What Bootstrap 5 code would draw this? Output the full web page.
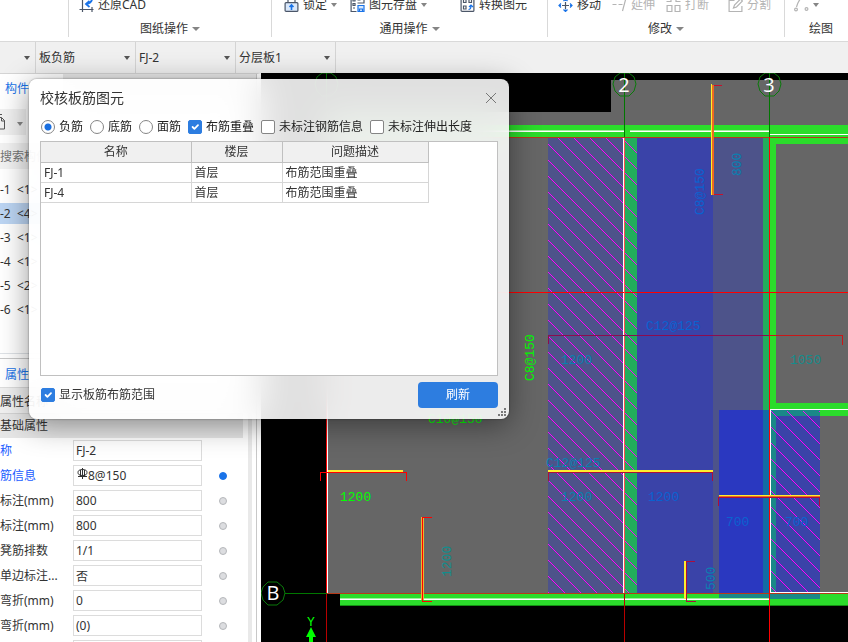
<!DOCTYPE html>
<html lang="zh-CN">
<head>
<meta charset="utf-8">
<meta name="viewport" content="width=device-width, initial-scale=1">
<title>校核板筋图元</title>
<link href="https://cdn.jsdelivr.net/npm/bootstrap@5.3.0/dist/css/bootstrap.min.css" rel="stylesheet">
<style>
body{font-family:"Noto Sans","Noto Sans CJK SC",sans-serif;font-size:12px;line-height:20px;color:#333;background:#fff}
button{font:inherit;line-height:20px}
.ribbon{border-bottom:1px solid #d9d9d9}
.ribbon-group{border-right:1px solid #d9d9d9;height:37px}
.ribbon-group:last-child{border-right:0}
.tools{margin-top:-5px;height:20px}
.tools-draw{padding-left:10px}
.tools-common{padding-left:12px}
.tools-edit{padding-left:10px;gap:11px}
.tools-shape{padding-left:9px}
.tool{background:none;border:0;padding:0;color:#333;white-space:nowrap;display:flex;align-items:center;gap:4px}
.tool:disabled{color:#b4b4b4}
.tool svg{width:15px;height:14px;fill:none;stroke:#4b5668;stroke-width:1.2}
.tool:disabled svg{stroke:#b4b4b4}
.tool svg .accent{stroke:#1a73e8}
.tool-store{margin-left:13px}
.tool-convert{margin-left:33px}
.arrow{border:3px solid transparent;border-top:4px solid #858585;border-bottom:0;display:inline-block}
.arrow-lg{border-width:4px 4px 0}
.g-start{flex:0 0 69px}.g-draw{flex:0 0 203px}.g-common{flex:0 0 276px}.g-edit{flex:0 0 237px}
.selectors{background:#f0f0f0;height:31px}
.picker{width:100px;height:31px;border:0;border-right:1px solid #d4d4d4;border-radius:0;background:transparent url("data:image/svg+xml,%3Csvg xmlns='http://www.w3.org/2000/svg' viewBox='0 0 6 4'%3E%3Cpath d='M0 0h6L3 4z' fill='%23555'/%3E%3C/svg%3E") no-repeat right 5px center/6px 4px;padding:0 12px 0 3px;font-size:12px;color:#333;appearance:none}
.picker-cut{width:36px}
.side{flex:0 0 261px;background:#fff;border-top:1px solid #d4d4d4;border-right:4px solid #fff}
.side-body{border-right:1px solid #c8c8c8}
.side-tabs{background:#e9e9e9;height:31px}
.side-tabs a{background:#fff;width:63px;padding:5px;height:31px}
.side a{color:#1a73e8;text-decoration:none}
.mini{background:#f1f1f1;border:0;height:26px;padding:0}
.mini-more{width:12px}
.side .find{width:240px;height:26px;border:0;background:#f2f2f2;padding:0;font-size:12px;color:#777}
.items{height:184px;padding-top:9px}
.items li{height:24px;padding-top:2px;white-space:pre}
.items li.on{background:linear-gradient(#fff 1px,#bcd5f3 1px,#bcd5f3 22px,#fff 22px)}
.props-tab{height:30px;border-top:1px solid #c8c8c8;border-bottom:1px solid #ddd;padding:6px 5px 0}
.props-head{background:#f0f0f0;height:25px;padding-top:4px}
.props-group{background:#e6e6e6;height:25px;width:243px;border-top:1px solid #d4d4d4;padding-top:2px}
.props-list{border-right:4px solid #e9e9e9;width:252px}
.prop{height:25px}
.prop label{width:73px;white-space:nowrap}
.prop input{width:129px;height:21px;border:1px solid #dcdcdc;padding:0 2px;font-size:12px;color:#333;background:#fff}
.bar-field{position:relative}
.prop .bar-field input{padding-left:14px}
.bar-field svg{position:absolute;left:4px;top:3px}
.blue{color:#1a5cff}
.dot{width:8px;height:8px;border-radius:50%;border:1px solid #b5b7ba;background:#dcdde0;margin-left:17px}
.dot.set{background:#1a73e8;border-color:#1a73e8}
.cad{background:#000}
.cad text{font-family:"Liberation Mono",monospace;font-size:13px}
.cad .axis{font-family:"Open Sans",sans-serif;font-size:20px;fill:#fff;text-anchor:middle}
.dialog{position:absolute;left:29px;top:79px;width:480px;border-radius:8px;background:rgba(255,255,255,.88);backdrop-filter:blur(18px);box-shadow:0 6px 30px rgba(0,0,0,.42),0 0 2px rgba(0,0,0,.5);padding:8px 11px 11px}
.dialog h1{font-size:14px;line-height:22px;font-weight:400}
.close-x{background:none;border:0;padding:0 1px;line-height:0}
.options{height:32px;gap:7px;color:#222}
.opt{display:flex;align-items:center;white-space:nowrap;gap:4px}
.opt .form-check-input{width:14px;height:14px;margin:0;border:1px solid #858585;flex:none}
.opt .form-check-input[type=checkbox]{border-radius:2px}
.opt .form-check-input[type=checkbox]:checked{background-color:#2d7de0;border-color:#2d7de0}
.opt .form-check-input[type=radio]:checked{background:radial-gradient(circle,#1a6fe0 3px,#fff 4px)}
.inset-1{padding-left:1px}
.results{height:235px;border:1px solid #c0c0c0;background:#fff}
.results table{width:387px;table-layout:fixed;border-collapse:collapse}
.c-name{width:150px}.c-floor{width:91px}.c-issue{width:146px}
.results th{font-weight:400;text-align:center;background:#f0f0f0;border:1px solid #c0c0c0;border-top:0;border-left:0;height:20px;padding:0;line-height:19px}
.results td{border:1px solid #d6d6d6;border-left:0;height:20px;padding:0 3px;line-height:19px}
.dialog-foot{padding-top:6px}
.btn-refresh{background:#2d7de0;color:#fff;width:80px;height:26px;padding:0;font-size:12px;border:0;border-radius:4px}
.grip{position:absolute;right:3px;bottom:3px}
</style>
<script src="https://cdn.jsdelivr.net/npm/bootstrap@5.3.0/dist/js/bootstrap.bundle.min.js"></script>
</head>
<body class="vh-100 d-flex flex-column overflow-hidden position-relative">
<header class="ribbon d-flex overflow-hidden flex-shrink-0 pb-1">
  <div class="ribbon-group g-start"></div>
  <div class="ribbon-group g-draw">
    <div class="tools tools-draw d-flex">
      <button class="tool"><svg viewBox="0 0 14 14"><path d="M3 0v14M0 11.500h14M12.500 9v5"/><path class="accent" d="M12.500 1.500C12 4 10 5.500 7 6M10 3L6.500 6L10 9" stroke-width="1.800"/></svg>还原CAD</button>
    </div>
    <div class="d-flex justify-content-center align-items-center pt-1 gap-1">图纸操作 <span class="arrow arrow-lg"></span></div>
  </div>
  <div class="ribbon-group g-common">
    <div class="tools tools-common d-flex">
      <button class="tool"><svg viewBox="0 0 14 14"><path d="M3.500 5V1h7v4"/><rect x=".6" y="4.600" width="12.800" height="8.800" rx="1" fill="#d9e8fb"/><path class="accent" d="M7 12V7M5 9l2-2 2 2" stroke-width="1.600"/></svg>锁定<span class="arrow"></span></button>
      <button class="tool tool-store"><svg viewBox="0 0 14 14"><path d="M6 13.500H.6V0M2.500 1h2v2h-2zM2.500 5.500h2v2h-2zM2.500 10h2M7 2h3M7 5h6.500V0"/><path class="accent" d="M7.500 7.500h6v6h-6zM9 13.500v-2.500h3v2.500" fill="#d9e8fb"/></svg>图元存盘<span class="arrow"></span></button>
      <button class="tool tool-convert"><svg viewBox="0 0 14 14"><rect x=".6" y="-2" width="12.800" height="15.400" rx="1"/><path d="M3 1.500h2.500v3H3zM8.500 1.500H11v3H8.500zM3 8h2.500v3H3z"/><path class="accent" d="M8 11.500c2 0 2.500-1 2.500-4M8.500 9l2-2 2 2"/></svg>转换图元</button>
    </div>
    <div class="d-flex justify-content-center align-items-center pt-1 gap-1">通用操作 <span class="arrow arrow-lg"></span></div>
  </div>
  <div class="ribbon-group g-edit">
    <div class="tools tools-edit d-flex">
      <button class="tool"><svg viewBox="0 0 14 14"><path d="M7 4v7M3.500 7.500h7"/><path class="accent" d="M5 11.500l2 2 2-2M5 3l2-2 2 2M2.500 5.500L.5 7.500l2 2M11.500 5.500l2 2-2 2M.5 7.500h2M11.500 7.500h2M7 1v2M7 11.500v2"/></svg>移动</button>
      <button class="tool" disabled><svg viewBox="0 0 14 14"><path d="M0 6.500h4M6 6.500h4M13.500 0L10 13"/></svg>延伸</button>
      <button class="tool" disabled><svg viewBox="0 0 14 14"><path d="M0 3.500h4.500V0M14 3.500H9.500V0M.6 7.500h4.800v6H.6zM8.600 7.500h4.800v6H8.600z"/></svg>打断</button>
      <button class="tool ms-2" disabled><svg viewBox="0 0 14 14"><path d="M6 2.500H.6v11h12.800V8M5 10l1-3 6-6 2 2-6 6z"/></svg>分割</button>
    </div>
    <div class="d-flex justify-content-center align-items-center pt-1 gap-1">修改 <span class="arrow arrow-lg"></span></div>
  </div>
  <div class="ribbon-group flex-grow-1">
    <div class="tools tools-shape d-flex">
      <button class="tool" disabled aria-label="弧线"><svg viewBox="0 0 14 14"><path d="M7 0C4 2 3 6 2 9"/><circle cx="1.500" cy="11.500" r="1.400"/><circle cx="12" cy="11" r="1.400"/></svg><span class="arrow"></span></button>
    </div>
    <div class="pt-1 ps-4 text-nowrap">绘图</div>
  </div>
</header>
<nav class="selectors d-flex flex-shrink-0">
  <select class="picker picker-cut" aria-label="类别"><option></option></select>
  <select class="picker" aria-label="构件类型"><option>板负筋</option></select>
  <select class="picker" aria-label="构件"><option>FJ-2</option></select>
  <select class="picker" aria-label="分层"><option>分层板1</option></select>
</nav>
<main class="d-flex flex-grow-1 overflow-hidden">
  <aside class="side overflow-hidden">
   <div class="side-body">
    <div class="side-tabs"><a href="#" class="d-block">构件</a></div>
    <div class="d-flex pt-1">
      <button class="mini" aria-label="复制"><svg width="14" height="26" fill="none" stroke="#555"><path d="M-2 8.500H1.500l3 3V20H-2M1.500 8.500v3.500H5M-2 5.500h4"/></svg></button>
      <button class="mini mini-more" aria-label="更多"><span class="arrow"></span></button>
    </div>
    <input class="find d-block mt-2" placeholder="搜索构件..." aria-label="搜索构件">
    <ul class="items list-unstyled mb-0"><li>-1  &lt;1&gt;</li><li class="on">-2  &lt;4&gt;</li><li>-3  &lt;1&gt;</li><li>-4  &lt;1&gt;</li><li>-5  &lt;2&gt;</li><li>-6  &lt;1&gt;</li></ul>
    <div class="border-top pt-1"></div>
    <div class="props-tab"><a href="#">属性</a></div>
    <div class="props-head">属性名称</div>
    <div class="props-list">
      <div class="props-group">基础属性</div>
      <div class="prop d-flex align-items-center"><label for="p1" class="blue">称</label><input id="p1" value="FJ-2"></div>
      <div class="prop d-flex align-items-center"><label for="p2" class="blue">筋信息</label><span class="bar-field d-flex"><input id="p2" value="8@150"><svg width="11" height="12" fill="none" stroke="#333"><path d="M5.500 0v11M1 8.500h9M3.500 2v6.500M7.500 2v6.500"/><ellipse cx="5.500" cy="4.500" rx="4.500" ry="3"/></svg></span><span class="dot set"></span></div>
      <div class="prop d-flex align-items-center"><label for="p3">标注(mm)</label><input id="p3" value="800"><span class="dot"></span></div>
      <div class="prop d-flex align-items-center"><label for="p4">标注(mm)</label><input id="p4" value="800"><span class="dot"></span></div>
      <div class="prop d-flex align-items-center"><label for="p5">凳筋排数</label><input id="p5" value="1/1"><span class="dot"></span></div>
      <div class="prop d-flex align-items-center"><label for="p6">单边标注...</label><input id="p6" value="否"><span class="dot"></span></div>
      <div class="prop d-flex align-items-center"><label for="p7">弯折(mm)</label><input id="p7" value="0"><span class="dot"></span></div>
      <div class="prop d-flex align-items-center"><label for="p8">弯折(mm)</label><input id="p8" value="(0)"><span class="dot"></span></div>
      <div class="prop d-flex align-items-center"><label for="p9"></label><input id="p9" aria-label="属性"></div>
    </div>
   </div>
  </aside>
  <div class="cad flex-grow-1 overflow-hidden">
  <svg width="100%" height="100%" class="d-block" fill="none">
    <defs>
      <pattern id="h1" width="16" height="16" patternUnits="userSpaceOnUse" patternTransform="translate(548 144)"><path d="M0 0L16 16M-1 15L1 17M15 -1L17 1" stroke="#f0f" shape-rendering="crispEdges"/></pattern>
      <pattern id="h2" width="16" height="16" patternUnits="userSpaceOnUse" patternTransform="translate(771 427)"><path d="M0 0L16 16M-1 15L1 17M15 -1L17 1" stroke="#f0f" shape-rendering="crispEdges"/></pattern>
    </defs>
    <g transform="translate(-261 -73)">
     <g shape-rendering="crispEdges">
      <path fill="#666" d="M327 112H611V80H3000V594H327z"/>
      <path fill="#2bdc2b" d="M327 125H3000V144H776V403H3000V416H769V137H327zM340 594H3000V606H340z"/>
      <path fill="#149014" d="M340 605H3000v1H340z"/>
      <path fill="#4d538a" d="M548 138h76v456h-76zM713 138h50v456h-50z"/>
      <path fill="#22ad5c" d="M624 138h13v456h-13zM763 138h6v272h-6z"/>
      <path fill="#3a43a8" d="M637 138h76v456h-76zM776 416h44v178h-44z"/>
      <path fill="#2a38c0" d="M719 410h44v184h-44z"/>
      <path fill="#136ba3" d="M763 410h6v184h-6z"/>
      <path fill="#1a8888" d="M769 410h51v6h-44v178h-7zM719 594h101v5H719z"/>
      <path fill="url(#h1)" d="M548 138h89v455h-89z"/>
      <path fill="url(#h2)" d="M770 411h50v181h-50z"/>
      <path stroke="#fff" d="M327 131.500H624M630 131.500H769M770 134.500H3000M770 409.500H3000M340 599.500H769M770 592.500H3000M623.500 138V593M327.500 112V593M770.500 410V593"/>
      <path stroke="#9cf29c" d="M340 598.500H769M327 130.500H624M630 130.500H769"/>
      <path stroke="#b73a18" d="M327 137.500H3000M327 593.500H3000"/>
      <path stroke="#f00" d="M327 292.500H3000M769.500 137V3000M326.500 137V593"/>
      <path stroke="#ff5050" d="M624.500 138V593"/>
      <path stroke="#b80000" d="M624.500 594V3000M326.500 594V3000"/>
      <path stroke="#070" d="M326.500 73V137M624.500 73V137M769.500 73V137M285 593.500H327"/>
      <path stroke="#8c0c50" d="M548.500 344V335.500H769"/><path stroke="#c81818" d="M769 335.500H842.500V345"/>
      <path stroke="#ffed2e" stroke-width="2" d="M328 471H403M548 470.500H713M685 561V599"/>
      <path stroke="#ffed2e" d="M719 495.500H820M711.500 84V195"/>
      <path stroke="#e8b830" stroke-width="3" d="M422.500 517V600"/>
      <path stroke="#f00" d="M320.500 481V472.500H406.500V481M432 517.500H422.500V601.500H432"/>
      <path stroke="#ad0d3c" d="M548.500 481V472.500H712.500V481M718.500 506V497.500H819.500V506M695 561.500H686.500V601.500H696"/>
      <path stroke="#ed6a21" d="M719 496.500H820"/>
      <path stroke="#ed6a21" stroke-width="2" d="M713 85V195"/><path stroke="#c8102c" d="M714 85.500H722M714 194.500H723"/>
     </g>
     <g stroke="#0a7a0a">
      <path d="M620 73h9l5 4 2 7-2 7-5 5h-9l-5-5-2-7 2-7zM765 73h9l5 4 2 7-2 7-5 5h-9l-5-5-2-7 2-7zM322 73h9l5 4 2 7-2 7-5 5h-9l-5-5-2-7 2-7zM268 582h9l6 5 2 6-2 7-6 5h-9l-5-5-2-7 2-6z"/>
     </g>
     <text class="axis" x="624" y="92">2</text><text class="axis" x="769" y="92">3</text><text class="axis" x="273" y="600">B</text>
     <g fill="#0f0">
      <text x="340" y="501">1200</text><text x="428" y="423">C10@150</text>
      <text transform="translate(534 381) rotate(-90)">C8@150</text>
      <text x="307" y="626">Y</text><path d="M311 627l5 10h-3v3000h-4V637h-3z"/>
     </g>
     <g fill="#148c8c">
      <text transform="translate(451 577) rotate(-90)">1200</text><text x="790" y="364">1050</text>
     </g>
     <g fill="#0a7fb0">
      <text x="546" y="467">C12@125</text><text x="561" y="501">1200</text><text x="561" y="364">1200</text>
      <text transform="translate(741 176) rotate(-90)">800</text><text transform="translate(715 590) rotate(-90)">500</text>
     </g>
     <g fill="#0a62d0">
      <text x="646" y="330">C12@125</text><text x="648" y="501">1200</text><text x="726" y="526">700</text><text x="785" y="526">700</text>
      <text transform="translate(704 215) rotate(-90)">C8@150</text>
     </g>
    </g>
  </svg>
  </div>
</main>
<section class="dialog" role="dialog" aria-labelledby="dlg-title">
  <div class="d-flex justify-content-between align-items-center">
    <h1 id="dlg-title" class="mb-0">校核板筋图元</h1>
    <button class="close-x" aria-label="关闭"><svg width="12" height="12" stroke="#777"><path d="M1 1l10 10M11 1L1 11"/></svg></button>
  </div>
  <div class="options inset-1 d-flex align-items-center pt-1">
    <label class="opt"><input class="form-check-input" type="radio" name="kind" checked><span>负筋</span></label>
    <label class="opt"><input class="form-check-input" type="radio" name="kind"><span>底筋</span></label>
    <label class="opt"><input class="form-check-input" type="radio" name="kind"><span>面筋</span></label>
    <label class="opt"><input class="form-check-input" type="checkbox" checked><span>布筋重叠</span></label>
    <label class="opt"><input class="form-check-input" type="checkbox"><span>未标注钢筋信息</span></label>
    <label class="opt"><input class="form-check-input" type="checkbox"><span>未标注伸出长度</span></label>
  </div>
  <div class="results">
    <table>
      <colgroup><col class="c-name"><col class="c-floor"><col class="c-issue"></colgroup>
      <thead><tr><th>名称</th><th>楼层</th><th>问题描述</th></tr></thead>
      <tbody><tr><td>FJ-1</td><td>首层</td><td>布筋范围重叠</td></tr><tr><td>FJ-4</td><td>首层</td><td>布筋范围重叠</td></tr></tbody>
    </table>
  </div>
  <div class="dialog-foot inset-1 d-flex justify-content-between align-items-center">
    <label class="opt"><input class="form-check-input" type="checkbox" checked><span>显示板筋布筋范围</span></label>
    <button class="btn btn-refresh">刷新</button>
  </div>
  <svg class="grip" width="8" height="8" fill="#777"><path d="M6 0h2v2H6zM3 3h2v2H3zM6 3h2v2H6zM0 6h2v2H0zM3 6h2v2H3zM6 6h2v2H6z"/></svg>
</section>
</body>
</html>
